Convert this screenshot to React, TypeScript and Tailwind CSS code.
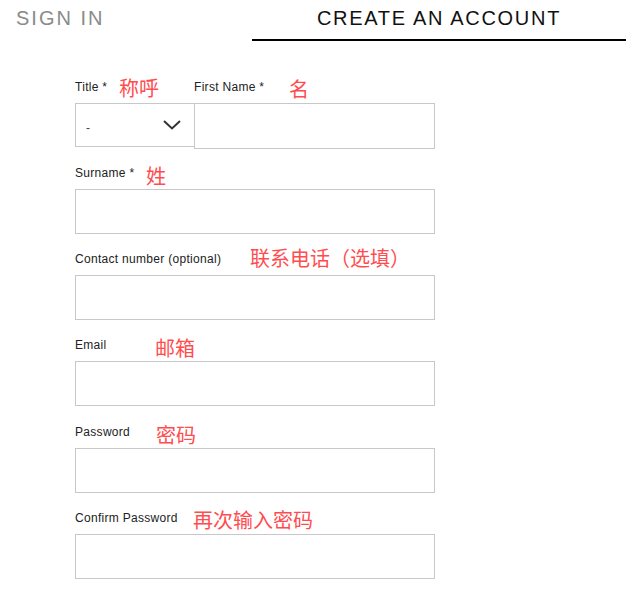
import { ReactElement } from "react";

const latin = { fontFamily: '"Liberation Sans", Arial, sans-serif' };
const cjk = { fontFamily: '"Noto Sans CJK SC", "Noto Sans", sans-serif' };

type Field = { label: string; note: string; noteLeft: number; noteTop: number; gap: number };

const fields: Field[] = [
  { label: "Surname *", note: "姓", noteLeft: 71, noteTop: 1, gap: 16 },
  { label: "Contact number (optional)", note: "联系电话（选填）", noteLeft: 175, noteTop: -3, gap: 17 },
  { label: "Email", note: "邮箱", noteLeft: 80, noteTop: 1, gap: 17 },
  { label: "Password", note: "密码", noteLeft: 81, noteTop: 1, gap: 18 },
  { label: "Confirm Password", note: "再次输入密码", noteLeft: 118, noteTop: 0, gap: 17 },
];

function Note({ text, left, top }: { text: string; left: number; top: number }): ReactElement {
  return (
    <span
      className="absolute text-[20px] leading-[20px] text-[#ff4d4f] whitespace-nowrap tracking-normal"
      style={{ ...cjk, left, top }}
    >
      {text}
    </span>
  );
}

export default function App(): ReactElement {
  return (
    <div className="w-[627px] h-[592px] bg-white text-[#222]" style={latin}>
      {/* tabs */}
      <div className="flex h-[41px] pr-px">
        <div className="w-[252px] pl-4 pt-[4px] text-[20px] leading-[28px] tracking-[2px] text-[#8a8a8a]">
          SIGN IN
        </div>
        <div className="flex-1 pt-[4px] text-center text-[20px] leading-[28px] tracking-[1.7px] text-[#111] border-b-2 border-black">
          CREATE AN ACCOUNT
        </div>
      </div>

      <form className="ml-[75px] w-[360px] pt-[38px]">
        {/* title + first name */}
        <div className="relative flex h-[24px] text-[12px] leading-[16px] tracking-[0.3px]">
          <span className="w-[119px]">Title *</span>
          <span>First Name *</span>
          <Note text="称呼" left={44} top={-1} />
          <Note text="名" left={214} top={0} />
        </div>
        <div className="flex items-start">
          <div className="flex w-[120px] h-[44px] items-center justify-between border border-[#c8c8c8] pl-[10px] pr-[13px]">
            <span className="mt-[6px] text-[12px] text-[#444]">-</span>
            <svg width="18" height="10" viewBox="0 0 18 10" fill="none">
              <path d="M1 1 L9 8.5 L17 1" stroke="#333" strokeWidth="2" />
            </svg>
          </div>
          <div className="flex-1 -ml-px h-[46px] border border-[#c8c8c8]" />
        </div>

        {fields.map((f) => (
          <div key={f.label} style={{ paddingTop: f.gap }}>
            <div className="relative h-[24px] text-[12px] leading-[16px] tracking-[0.3px]">
              <span>{f.label}</span>
              <Note text={f.note} left={f.noteLeft} top={f.noteTop} />
            </div>
            <div className="h-[45px] border border-[#c8c8c8]" />
          </div>
        ))}
      </form>
    </div>
  );
}
